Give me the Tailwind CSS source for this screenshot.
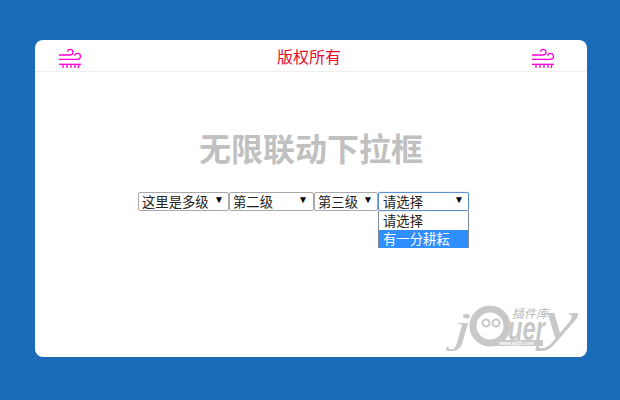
<!DOCTYPE html>
<html lang="zh-CN">
<head>
    <meta charset="UTF-8">
    <title>无限联动下拉框</title>
    <script src="https://cdn.jsdelivr.net/npm/@tailwindcss/browser@4"></script>
</head>
<body class="w-[620px] h-[400px] overflow-hidden bg-[#1a6cb9] pt-10 pl-[35px] font-['Liberation_Sans','Noto_Sans_CJK_SC',sans-serif]">
    <div class="relative w-[552px] h-[317px] bg-white rounded-lg">
        <!-- Header -->
        <div class="flex items-center justify-between h-[32px] pl-[22px] pr-[32px] border-b border-[#eeeeee]">
            <svg class="w-[25px] h-[25px] text-[#ff00dc] mt-[6px]" viewBox="0 0 25 25" fill="none" stroke="currentColor" stroke-width="1.3">
                <path d="M2 9H13C15 9 16 7.700 16 6.200C16 4.500 14.800 3.400 13.300 3.400C11.800 3.400 10.700 4.500 10.700 5.700"/>
                <path d="M2 13.300H20C22 13.300 23.500 12 23.500 10.200C23.500 8.400 22.100 7.300 20.500 7.300C19 7.300 17.800 8.300 17.700 9.700"/>
                <path d="M2 18.300H24"/>
                <path d="M6 18.300V22M10 18.300V22M14 18.300V22M18 18.300V22M22 18.300L21.200 22"/>
            </svg>
            <span class="ml-[6px] mt-[4px] text-base leading-none text-[#e60c2c]">版权所有</span>
            <svg class="w-[25px] h-[25px] text-[#ff00dc] mt-[6px]" viewBox="0 0 25 25" fill="none" stroke="currentColor" stroke-width="1.3">
                <path d="M2 9H13C15 9 16 7.700 16 6.200C16 4.500 14.800 3.400 13.300 3.400C11.800 3.400 10.700 4.500 10.700 5.700"/>
                <path d="M2 13.300H20C22 13.300 23.500 12 23.500 10.200C23.500 8.400 22.100 7.300 20.500 7.300C19 7.300 17.800 8.300 17.700 9.700"/>
                <path d="M2 18.300H24"/>
                <path d="M6 18.300V22M10 18.300V22M14 18.300V22M18 18.300V22M22 18.300L21.200 22"/>
            </svg>
        </div>

        <h1 class="mt-[58px] text-center text-[32px] leading-[40px] font-bold text-[#c0c0c0]">无限联动下拉框</h1>

        <!-- Selects -->
        <div class="flex mt-[22px] pl-[103px] text-[13.33px] leading-[20px] text-[#222222]">
            <div class="flex justify-between w-[91px] h-[19px] pl-[3px] pr-[4px] border border-[#a9a9a9] rounded-[2px]"><span>这里是多级</span><span class="text-[10px] leading-[14px] text-black">▼</span></div>
            <div class="flex justify-between w-[85px] h-[19px] pl-[3px] pr-[5px] border border-[#a9a9a9] rounded-[2px]"><span>第二级</span><span class="text-[10px] leading-[14px] text-black">▼</span></div>
            <div class="flex justify-between w-[64px] h-[19px] pl-[3px] pr-[4px] border border-[#a9a9a9] rounded-[2px]"><span>第三级</span><span class="text-[10px] leading-[14px] text-black">▼</span></div>
            <div class="relative w-[91px]">
                <div class="flex justify-between h-[19px] pl-[4px] pr-[4px] border border-[#5b8fd0] rounded-[2px] shadow-[0_0_1px_#5b8fd0]"><span>请选择</span><span class="text-[10px] leading-[14px] text-black">▼</span></div>
                <div class="absolute left-0 top-[19px] w-[91px] pt-[1px] border-x border-[#7f8a99]">
                    <div class="h-[18px] pl-[4px]">请选择</div>
                    <div class="h-[18px] pl-[4px] bg-[#2f8fff] text-white">有一分耕耘</div>
                </div>
            </div>
        </div>

        <!-- Watermark logo -->
        <div class="absolute left-[412px] top-[265px] w-[130px] h-[44px] text-[#c8c8c8]">
            <span class="absolute left-[6px] top-[0px] origin-left scale-x-[1.6] text-[42px] leading-[46px] italic font-['Liberation_Serif']">j</span>
            <svg class="absolute left-[22px] top-[0px] w-[44px] h-[42px]" viewBox="0 0 44 42">
                <circle cx="21" cy="21" r="17" fill="none" stroke="currentColor" stroke-width="7"/>
                <circle cx="17" cy="18" r="3.500" fill="none" stroke="currentColor" stroke-width="2"/>
                <circle cx="27" cy="18" r="3.500" fill="none" stroke="currentColor" stroke-width="2"/>
            </svg>
            <span class="absolute left-[61px] top-[3px] origin-left scale-x-[.7] text-[34px] leading-[40px] font-bold italic">uer</span>
            <span class="absolute left-[65px] top-[2px] text-[12px] leading-[14px] italic text-[#b8b8b8]">插件库</span>
            <span class="absolute left-[95px] top-[-15px] origin-left scale-x-[1.4] text-[58px] leading-[60px] italic font-['Liberation_Serif']">y</span>
            <span class="absolute left-[43px] top-[35px] w-[53px] h-[6px] overflow-hidden text-[5px] leading-[6px] font-bold text-white bg-[#c8c8c8] text-center">www.jq22.com</span>
        </div>
    </div>
</body>
</html>
